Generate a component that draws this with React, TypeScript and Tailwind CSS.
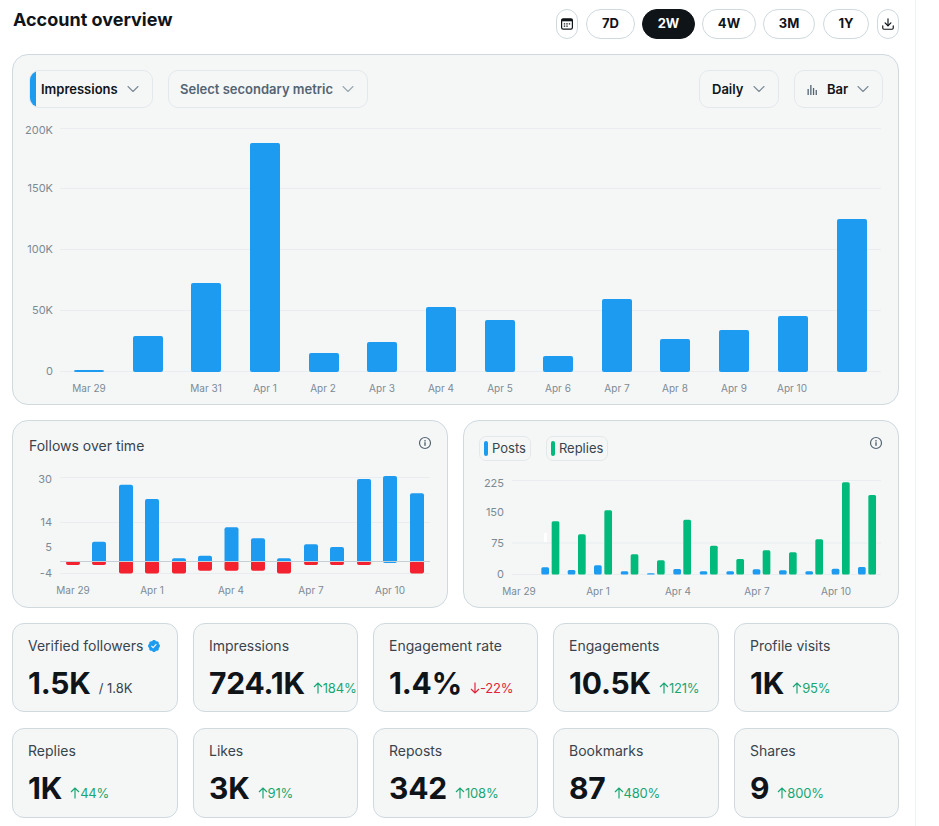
import React from "react";
import { ChevronDown, Download } from "lucide-react";

const FONT = "font-['Inter','Liberation_Sans',sans-serif]";
const TICK = "#7c8a94";

function Select({ children, strip, muted, w }: { children: React.ReactNode; strip?: boolean; muted?: boolean; w: string }) {
  return (
    <div className={`relative h-[38px] ${w} rounded-[10px] border border-[#e3e8ea] flex items-center justify-between pr-[9px] overflow-hidden text-[13px] font-semibold ${muted ? "text-[#536471]" : "text-[#0f1419]"}`}>
      {strip && <span className="absolute left-0 top-0 bottom-0 w-[6px] bg-[#1d9bf0]" />}
      <div className="pt-px">{children}</div>
      <ChevronDown size={20} strokeWidth={1.3} className={muted ? "text-[#9aa6ae]" : "text-[#7c8a94]"} />
    </div>
  );
}

function Range({ label, active, w }: { label: string; active?: boolean; w: string }) {
  return (
    <div className={`h-[30px] ${w} rounded-full flex items-center justify-center text-[13px] font-bold border ${active ? "bg-[#0f1419] border-[#0f1419] text-white" : "bg-white border-[#cfd9de] text-[#0f1419]"}`}>
      {label}
    </div>
  );
}

function InfoIcon() {
  return (
    <svg width="14" height="14" viewBox="0 0 14 14" fill="none" className="text-[#536471]">
      <circle cx="7" cy="7" r="5.5" stroke="currentColor" strokeWidth="1.2" />
      <rect x="6.3" y="6.2" width="1.4" height="3.6" fill="currentColor" />
      <rect x="6.3" y="4.1" width="1.4" height="1.4" fill="currentColor" />
    </svg>
  );
}

function Bar({ x, y, w, bottom, fill, r = 2 }: { x: number; y: number; w: number; bottom: number; fill: string; r?: number }) {
  return <rect x={x} y={y} width={w} height={bottom - y} rx={r} ry={r} fill={fill} />;
}

function Tick({ x, y, children, anchor = "end", size = 11 }: { x: number; y: number; children: React.ReactNode; anchor?: "end" | "middle"; size?: number }) {
  return <text x={x} y={y} textAnchor={anchor} fontSize={size} fill={TICK}>{children}</text>;
}

function MainChart() {
  const grid = [128, 188, 249, 310, 371];
  const ticks: [string, number][] = [["200K", 134], ["150K", 192], ["100K", 253], ["50K", 314], ["0", 375]];
  const bars = [
    [74, 370], [133, 336], [191, 283], [250, 143], [309, 353], [367, 342], [426, 307],
    [485, 320], [543, 356], [602, 299], [660, 339], [719, 330], [778, 316], [837, 219],
  ];
  const labels: [number, string][] = [
    [89, "Mar 29"], [206, "Mar 31"], [265, "Apr 1"], [323, "Apr 2"], [382, "Apr 3"], [441, "Apr 4"],
    [500, "Apr 5"], [558, "Apr 6"], [617, "Apr 7"], [675, "Apr 8"], [734, "Apr 9"], [792, "Apr 10"],
  ];
  return (
    <svg viewBox="13 108 885 295" width="885" height="295" className="block">
      {grid.map((y) => <line key={y} x1="60" x2="881" y1={y + 0.5} y2={y + 0.5} stroke="#e9edef" />)}
      {ticks.map(([t, y]) => <Tick key={t} x={53} y={y}>{t}</Tick>)}
      {bars.map(([x, y]) => <Bar key={x} x={x} y={y} w={30} bottom={372} fill="#1d9bf0" />)}
      {labels.map(([x, t]) => <Tick key={t} x={x} y={392} anchor="middle" size={10}>{t}</Tick>)}
    </svg>
  );
}

function FollowsChart() {
  const xs = [66, 92, 119, 145, 172, 198, 224.5, 251, 277, 304, 330, 357, 383, 410];
  const tops = [562, 541.7, 484.7, 499, 558.3, 555.7, 527.3, 538.3, 558.3, 544.3, 547, 479, 476, 493.3];
  const bottoms = [565, 565, 573.5, 573.5, 573.5, 570.7, 570.7, 570.7, 573.5, 565, 565, 565, 562, 573.5];
  return (
    <svg viewBox="13 465 434 141" width="434" height="141" className="block">
      {[477, 522, 573].map((y) => <line key={y} x1="60" x2="430" y1={y + 0.5} y2={y + 0.5} stroke="#e9edef" />)}
      {xs.map((x, i) => (
        <g key={x}>
          {tops[i] < 562 && <Bar x={x} y={tops[i]} w={14} bottom={563} fill="#1d9bf0" />}
          {bottoms[i] > 562 && <Bar x={x} y={561} w={14} bottom={bottoms[i]} fill="#f4212e" />}
        </g>
      ))}
      <line x1="60" x2="430" y1="561.5" y2="561.5" stroke="#c4cfd6" />
      <Tick x={52} y={483}>30</Tick>
      <Tick x={52} y={526}>14</Tick>
      <Tick x={52} y={551}>5</Tick>
      <Tick x={52} y={577}>-4</Tick>
      {[[73, "Mar 29"], [152, "Apr 1"], [231, "Apr 4"], [311, "Apr 7"], [390, "Apr 10"]].map(([x, t]) => (
        <Tick key={t as string} x={x as number} y={594} anchor="middle" size={10}>{t}</Tick>
      ))}
    </svg>
  );
}

function PostsChart() {
  const blue = [472, 480, 466, 484, 490, 477, 484, 484, 478, 481, 484, 476, 471];
  const green = [334, 373, 301, 433, 451, 329, 407, 447, 421, 427, 388, 217, 255];
  const bx = [244, 323, 402, 482, 561, 640, 719, 799, 878, 957, 1036, 1115, 1194];
  const gx = [275, 354, 433, 512, 591, 670, 750, 829, 908, 987, 1066, 1146, 1225];
  const Y = (z: number) => 410 + z / 3;
  const X = (z: number) => 460 + z / 3;
  return (
    <svg viewBox="464 465 434 141" width="434" height="141" className="block">
      {[480, 542.5, 574].map((y) => <line key={y} x1="512" x2="881" y1={y + 0.5} y2={y + 0.5} stroke="#e9edef" />)}
      <rect x="544" y="533" width="3" height="9" fill="#ffffff" />
      {blue.map((z, i) => <Bar key={i} x={X(bx[i])} y={Y(z)} w={7.7} bottom={574.5} fill="#1d9bf0" r={1.5} />)}
      {green.map((z, i) => <Bar key={i} x={X(gx[i])} y={Y(z)} w={7.7} bottom={574.5} fill="#00ba7c" r={1.5} />)}
      <Tick x={504} y={487}>225</Tick>
      <Tick x={504} y={516}>150</Tick>
      <Tick x={504} y={547}>75</Tick>
      <Tick x={504} y={578}>0</Tick>
      {[[519, "Mar 29"], [598, "Apr 1"], [678, "Apr 4"], [757, "Apr 7"], [836, "Apr 10"]].map(([x, t]) => (
        <Tick key={t as string} x={x as number} y={595} anchor="middle" size={10}>{t}</Tick>
      ))}
    </svg>
  );
}

function Legend({ label, color }: { label: string; color: string }) {
  return (
    <div className="h-[25px] rounded-[7px] border border-[#e3e8ea] flex items-center pl-[4px] pr-[4px] gap-[4px] text-[13px] text-[#39444d]">
      <span className={`w-[4px] h-[15px] rounded-full ${color}`} />
      {label}
    </div>
  );
}

function Arrow({ down }: { down?: boolean }) {
  return (
    <svg width="10" height="12" viewBox="0 0 10 12" fill="none" stroke="currentColor" strokeWidth="1.2" className={down ? "rotate-180" : ""}>
      <path d="M5 11.5V1M1 5L5 1L9 5" />
    </svg>
  );
}

type S = { label: string; value: string; delta?: string; down?: boolean; sub?: string; badge?: boolean };

function Stat({ s, tall }: { s: S; tall: boolean }) {
  return (
    <div className={`${tall ? "h-[90px]" : "h-[89px]"} rounded-[12px] border border-[#cfd9de] bg-[#f5f7f7] pl-[15px] pt-[12px] overflow-hidden whitespace-nowrap`}>
      <div className="flex items-center gap-[4px] text-[14px] leading-[19px] text-[#39444d]">
        {s.label}
        {s.badge && (
          <svg width="14" height="14" viewBox="0 0 24 24" fill="#1d9bf0">
            <path d="M22.25 12c0-1.43-.88-2.67-2.19-3.34.46-1.39.2-2.9-.81-3.91s-2.52-1.27-3.91-.81c-.66-1.31-1.91-2.19-3.34-2.19s-2.67.88-3.33 2.19c-1.4-.46-2.91-.2-3.92.81s-1.26 2.52-.8 3.91c-1.31.67-2.2 1.91-2.2 3.34s.89 2.67 2.2 3.34c-.46 1.39-.21 2.9.8 3.91s2.52 1.26 3.91.81c.67 1.31 1.91 2.19 3.34 2.19s2.68-.88 3.34-2.19c1.39.45 2.9.2 3.91-.81s1.27-2.52.81-3.91c1.31-.67 2.19-1.91 2.19-3.34zm-11.71 4.2L6.8 12.46l1.41-1.42 2.26 2.26 4.8-5.23 1.47 1.36-6.2 6.77z" />
          </svg>
        )}
      </div>
      <div className="flex items-end mt-[10px] h-[36px]">
        <span className="text-[30px] leading-[36px] font-bold text-[#0f1419] tracking-[-0.2px]">{s.value}</span>
        {s.sub && <span className="ml-[8px] mb-[4px] text-[13px] leading-[18px] text-[#39444d]">{s.sub}</span>}
        {s.delta && (
          <span className={`ml-[8px] mb-[4px] flex items-center text-[13px] tracking-[-0.2px] leading-[18px] ${s.down ? "text-[#e0243a]" : "text-[#17a673]"}`}>
            <Arrow down={s.down} />
            {s.delta}
          </span>
        )}
      </div>
    </div>
  );
}

const STATS: S[] = [
  { label: "Verified followers", value: "1.5K", sub: "/ 1.8K", badge: true },
  { label: "Impressions", value: "724.1K", delta: "184%" },
  { label: "Engagement rate", value: "1.4%", delta: "-22%", down: true },
  { label: "Engagements", value: "10.5K", delta: "121%" },
  { label: "Profile visits", value: "1K", delta: "95%" },
  { label: "Replies", value: "1K", delta: "44%" },
  { label: "Likes", value: "3K", delta: "91%" },
  { label: "Reposts", value: "342", delta: "108%" },
  { label: "Bookmarks", value: "87", delta: "480%" },
  { label: "Shares", value: "9", delta: "800%" },
];

export default function App() {
  return (
    <div className={`${FONT} w-[916px] h-[826px] overflow-hidden bg-white border-r border-[#eff3f4] pl-3 pr-4`}>
      <div className="h-[54px] flex items-start justify-between pt-[9px]">
        <h1 className="text-[18px] leading-[22px] font-bold text-[#0f1419] pl-px">Account overview</h1>
        <div className="flex items-center gap-[7px]">
          <div className="h-[30px] w-[22px] mr-px rounded-full border border-[#cfd9de] flex items-center justify-center text-[#0f1419]">
            <svg width="12" height="12" viewBox="0 0 12 12" fill="none">
              <rect x="0.6" y="0.9" width="10.8" height="10.2" rx="1.6" stroke="currentColor" strokeWidth="1.2" />
              <rect x="0.6" y="0.9" width="10.8" height="2.4" fill="currentColor" />
              <path d="M2.8 5.2h1.4v1.2H2.8zM5.3 5.2h1.4v1.2H5.3zM7.8 5.2h1.4v1.2H7.8zM2.8 7.6h1.4v1.2H2.8zM5.3 7.6h1.4v1.2H5.3z" fill="currentColor" />
            </svg>
          </div>
          <Range label="7D" w="w-[49px]" />
          <Range label="2W" active w="w-[53px]" />
          <Range label="4W" w="w-[54px]" />
          <Range label="3M" w="w-[52px] mr-px" />
          <Range label="1Y" w="w-[46px] mr-px" />
          <div className="h-[30px] w-[22px] rounded-full border border-[#cfd9de] flex items-center justify-center text-[#0f1419]">
            <Download size={14} strokeWidth={2} />
          </div>
        </div>
      </div>

      <section className="w-[887px] h-[351px] rounded-2xl border border-[#cfd9de] bg-[#f5f7f7] overflow-hidden">
        <div className="flex items-center pt-[15px] pl-4 pr-[15px]">
          <div className="flex gap-[15px]">
            <Select strip w="w-[124px]"><span className="pl-[11px]">Impressions</span></Select>
            <Select muted w="w-[200px]"><span className="pl-[11px]">Select secondary metric</span></Select>
          </div>
          <div className="ml-auto flex gap-[15px]">
            <Select w="w-[80px]"><span className="pl-[12px]">Daily</span></Select>
            <Select w="w-[89px]">
              <span className="pl-[12px] flex items-center gap-[9px]">
                <svg width="11" height="11" viewBox="0 0 11 11" fill="#536471"><rect x="0.5" y="5" width="1.3" height="6" /><rect x="3.2" y="1" width="1.3" height="10" /><rect x="5.9" y="4" width="1.3" height="7" /><rect x="8.6" y="6" width="1.3" height="5" /></svg>
                Bar
              </span>
            </Select>
          </div>
        </div>
        <MainChart />
      </section>

      <div className="grid grid-cols-2 gap-[15px] w-[887px] mt-[15px]">
        <section className="h-[188px] rounded-2xl border border-[#cfd9de] bg-[#f5f7f7] overflow-hidden">
          <div className="h-[44px] pl-4 pr-[15px] pt-[15px] flex items-start justify-between">
            <span className="text-[14px] leading-[20px] text-[#39444d]">Follows over time</span>
            <InfoIcon />
          </div>
          <FollowsChart />
        </section>
        <section className="h-[188px] rounded-2xl border border-[#cfd9de] bg-[#f5f7f7] overflow-hidden">
          <div className="h-[44px] pl-[15px] pr-[15px] pt-[15px] flex items-start justify-between">
            <div className="flex gap-[15px]">
              <Legend label="Posts" color="bg-[#1d9bf0]" />
              <Legend label="Replies" color="bg-[#00ba7c]" />
            </div>
            <InfoIcon />
          </div>
          <PostsChart />
        </section>
      </div>

      <div className="grid grid-cols-[166px_165px_165px_166px_165px] gap-x-[15px] gap-y-4 w-[887px] mt-[15px]">
        {STATS.map((s, i) => <Stat key={s.label} s={s} tall={i >= 5} />)}
      </div>
    </div>
  );
}
